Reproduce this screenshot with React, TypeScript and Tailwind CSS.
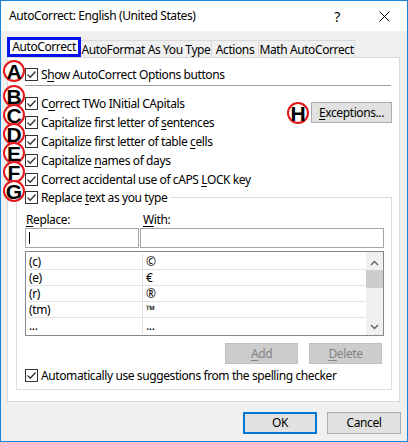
import type { ReactNode } from "react";

// Win10 style checkbox, always ticked here
const CheckBox = () => (
  <span className="flex h-[13px] w-[13px] shrink-0 items-center justify-center border border-[#333333] bg-white">
    <svg width="11" height="11" viewBox="0 0 11 11">
      <path d="M1.5 5.5 L4.2 8.2 L9.5 2.5" fill="none" stroke="#333333" strokeWidth="1.3" />
    </svg>
  </span>
);

const CheckRow = ({ children }: { children: ReactNode }) => (
  <div className="flex h-[19px] items-center pl-[9px]">
    <CheckBox />
    <span className="ml-[3px] whitespace-nowrap">{children}</span>
  </div>
);

const Key = ({ children }: { children: ReactNode }) => (
  <u className="underline underline-offset-[2px]">{children}</u>
);

// red callout letters laid over the dialog
const Badge = ({ letter, className }: { letter: string; className: string }) => (
  <div
    className={`absolute flex h-[22px] w-[22px] items-center justify-center rounded-full border-2 border-[#e3161b] bg-[radial-gradient(circle_at_45%_40%,#ffffff_55%,#cfcfcf)] font-['Liberation_Sans',sans-serif] text-[21px] font-bold tracking-normal text-black ${className}`}
  >
    <span className="mt-px block h-[15px] leading-[15px]">{letter}</span>
  </div>
);

const Button = ({
  children,
  disabled,
  primary,
  className = "",
}: {
  children: ReactNode;
  disabled?: boolean;
  primary?: boolean;
  className?: string;
}) => (
  <div
    className={`flex items-center justify-center ${
      disabled
        ? "border border-[#bfbfbf] bg-[#cccccc] text-[#838383]"
        : primary
        ? "border-2 border-[#0078d7] bg-[#e1e1e1] text-black"
        : "border border-[#adadad] bg-[#e1e1e1] text-black"
    } ${className}`}
  >
    {children}
  </div>
);

const entries = [
  ["(c)", "©"],
  ["(e)", "€"],
  ["(r)", "®"],
  ["(tm)", "™"],
  ["...", "..."],
];

const App = () => {
  return (
    <div className="relative h-[442px] w-[408px] overflow-hidden border border-[#1883d7] bg-[#f0f0f0] font-['Segoe_UI','Noto_Sans',sans-serif] text-[12px] tracking-[-0.4px] text-black">
      {/* title bar */}
      <div className="flex h-[30px] items-center bg-white pl-[8px]">
        <span>AutoCorrect: English (United States)</span>
        <span className="ml-auto mr-[39px] text-[14px]">?</span>
        <svg width="11" height="11" viewBox="0 0 11 11" className="mr-[17px]">
          <path d="M0.5 0.5 L10.5 10.5 M10.5 0.5 L0.5 10.5" stroke="#000" strokeWidth="1" />
        </svg>
      </div>

      {/* tabs */}
      <div className="ml-[6px] mt-[6px] flex h-[20px] items-end whitespace-nowrap">
        <div className="flex h-[20px] w-[74px] items-center justify-center border-[3px] border-[#0611ee] bg-white">
          AutoCorrect
        </div>
        <div className="flex h-[17px] w-[131px] items-center justify-center border border-b-0 border-l-0 border-[#d9d9d9] pt-[2px]">
          AutoFormat As You Type
        </div>
        <div className="flex h-[17px] w-[47px] items-center justify-center border border-b-0 border-l-0 border-[#d9d9d9] pt-[2px]">
          Actions
        </div>
        <div className="flex h-[17px] w-[96px] items-center justify-center border border-b-0 border-l-0 border-[#d9d9d9] pt-[2px]">
          Math AutoCorrect
        </div>
      </div>

      {/* tab page */}
      <div className="ml-[6px] w-[393px] border border-[#d9d9d9] bg-white pb-[11px] pl-[8px] pr-[7px] pt-[7px]">
        <CheckRow>
          S<Key>h</Key>ow AutoCorrect Options buttons
        </CheckRow>
        <div className="ml-[9px] mr-px mt-px h-px bg-[#a0a0a0]" />

        <div className="mt-[8px] flex">
          <div className="flex-1">
            <CheckRow>
              C<Key>o</Key>rrect TWo INitial CApitals
            </CheckRow>
            <CheckRow>
              Capitalize first letter of <Key>s</Key>entences
            </CheckRow>
            <CheckRow>
              Capitalize first letter of table <Key>c</Key>ells
            </CheckRow>
            <CheckRow>
              Capitalize <Key>n</Key>ames of days
            </CheckRow>
            <CheckRow>
              Correct accidental use of cAPS <Key>L</Key>OCK key
            </CheckRow>
          </div>
          <Button className="mt-[8px] h-[21px] w-[81px]">
            <span>
              <Key>E</Key>xceptions...
            </span>
          </Button>
        </div>

        {/* replace group */}
        <div className="mt-[8px] border border-[#dcdcdc] pb-[4px] pl-[8px] pr-[7px]">
          <div className="-mt-[10px] flex">
            <div className="bg-white pr-[3px]">
              <div className="flex h-[19px] items-center">
                <CheckBox />
                <span className="ml-[3px] whitespace-nowrap">
                  Replace <Key>t</Key>ext as you type
                </span>
              </div>
            </div>
          </div>

          <div className="mt-[5px] flex h-[16px] items-center">
            <span className="w-[115px] pl-px">
              <Key>R</Key>eplace:
            </span>
            <span className="pl-[3px]">
              <Key>W</Key>ith:
            </span>
          </div>
          <div className="flex gap-[1px]">
            <div className="flex h-[20px] w-[114px] items-center border border-[#a5a5a5] pl-[3px]">
              <span className="h-[12px] w-px bg-black" />
            </div>
            <div className="h-[20px] flex-1 border border-[#a5a5a5]" />
          </div>

          <div className="mt-[3px] flex h-[85px] border border-[#828790] pl-px pt-[2px]">
            <div className="flex-1">
              {entries.map(([from, to], i) => (
                <div
                  key={i}
                  className={`flex h-[16px] ${i < entries.length - 1 ? "border-b border-[#e3e3e3]" : ""}`}
                >
                  <div className="flex w-[116px] items-center border-r border-[#e3e3e3] pl-[2px]">{from}</div>
                  <div className="flex items-center pl-[3px]">{to}</div>
                </div>
              ))}
            </div>
            <div className="-mt-[2px] flex w-[17px] flex-col items-center bg-[#f0f0f0]">
              <svg width="9" height="6" viewBox="0 0 9 6" className="mt-[8px]">
                <path d="M1 5 L4.5 1.5 L8 5" fill="none" stroke="#606060" strokeWidth="1.4" />
              </svg>
              <div className="mt-[4px] h-[18px] w-[17px] bg-[#cdcdcd]" />
              <svg width="9" height="6" viewBox="0 0 9 6" className="mb-[5px] mt-auto">
                <path d="M1 1 L4.5 4.5 L8 1" fill="none" stroke="#606060" strokeWidth="1.4" />
              </svg>
            </div>
          </div>

          <div className="mr-[2px] mt-[7px] flex justify-end gap-[11px]">
            <Button disabled className="h-[21px] w-[73px]">
              <span>
                <Key>A</Key>dd
              </span>
            </Button>
            <Button disabled className="h-[21px] w-[73px]">
              <span>
                <Key>D</Key>elete
              </span>
            </Button>
          </div>

          <div className="mt-[2px] flex h-[19px] items-center">
            <CheckBox />
            <span className="ml-[3px] whitespace-nowrap">
              Automatically use su<Key>g</Key>gestions from the spelling checker
            </span>
          </div>
        </div>
      </div>

      {/* dialog buttons */}
      <div className="mr-[6px] mt-[10px] flex justify-end gap-[10px]">
        <Button primary className="h-[22px] w-[74px]">
          OK
        </Button>
        <Button className="h-[22px] w-[74px]">Cancel</Button>
      </div>

      <Badge letter="A" className="left-[2px] top-[59px]" />
      <Badge letter="B" className="left-[2px] top-[84px]" />
      <Badge letter="C" className="left-[2px] top-[103px]" />
      <Badge letter="D" className="left-[2px] top-[122px]" />
      <Badge letter="E" className="left-[2px] top-[141px]" />
      <Badge letter="F" className="left-[2px] top-[160px]" />
      <Badge letter="G" className="left-[2px] top-[179px]" />
      <Badge letter="H" className="left-[286px] top-[101px]" />
    </div>
  );
};

export default App;
